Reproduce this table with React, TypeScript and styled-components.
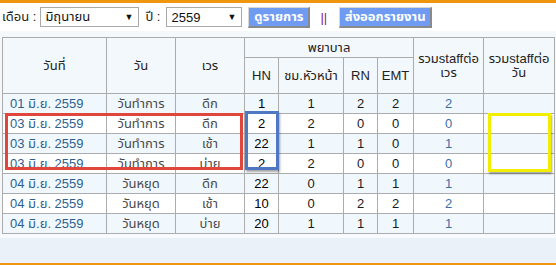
import React from "react";
import styled, { createGlobalStyle } from "styled-components";

const Global = createGlobalStyle`
  html, body { margin: 0; padding: 0; background: #ffffff; }
  body { font-family: Tahoma, "Liberation Sans", "Noto Sans Thai", "Noto Sans", sans-serif; font-size: 13px; color: #333; }
`;

const Page = styled.div`
  width: 556px;
  height: 265px;
  overflow: hidden;
  display: flex;
  flex-direction: column;
  background: #ffffff;
`;

const TopStrip = styled.div`
  height: 3px;
  background: #f0960e;
  flex: none;
`;

const Toolbar = styled.div`
  height: 28px;
  display: flex;
  align-items: center;
  padding-left: 2px;
  flex: none;
`;

const Label = styled.span<{ $ml?: number }>`
  margin-left: ${(p) => p.$ml ?? 0}px;
  color: #222;
  font-size: 13px;
  white-space: nowrap;
`;

const FakeSelect = styled.div<{ $w: number; $ml: number }>`
  box-sizing: border-box;
  width: ${(p) => p.$w}px;
  height: 20px;
  margin-left: ${(p) => p.$ml}px;
  border: 1px solid #a9a9a9;
  background: #fff;
  display: flex;
  align-items: center;
  justify-content: space-between;
  padding: 0 5px 0 4px;
  color: #111;
  font-size: 13px;
`;

const Arrow = styled.span`
  font-size: 9px;
  color: #111;
`;

const Button = styled.div<{ $w: number; $ml: number }>`
  box-sizing: border-box;
  width: ${(p) => p.$w}px;
  height: 21px;
  margin-left: ${(p) => p.$ml}px;
  background: #6f9cf2;
  color: #ffffff;
  font-weight: bold;
  font-size: 13px;
  display: flex;
  align-items: center;
  justify-content: center;
  border-top: 1px solid #d8d8d8;
  border-left: 1px solid #d8d8d8;
  border-right: 2px solid #8a8a8a;
  border-bottom: 2px solid #8a8a8a;
`;

const Sep = styled.span<{ $ml: number }>`
  margin-left: ${(p) => p.$ml}px;
  color: #8b1a8b;
  font-size: 13px;
`;

const Content = styled.div`
  background: #f5f8fb;
  padding: 6px 0 0 2px;
  flex: none;
`;

const TableWrap = styled.div`
  position: relative;
  width: 552px;
`;

const Table = styled.table`
  border-collapse: collapse;
  table-layout: fixed;
  width: 552px;
`;

const Th = styled.th`
  border: 1px solid #acacac;
  background: #f3f8fc;
  color: #222;
  font-weight: normal;
  font-size: 13px;
  text-align: center;
  padding: 0 2px;
  line-height: 14px;
`;

const Tr = styled.tr<{ $alt: boolean }>`
  height: 20px;
  background: ${(p) => (p.$alt ? "#f0f8fd" : "#ffffff")};
`;

const Td = styled.td<{ $color: string; $left?: boolean }>`
  border: 1px solid #acacac;
  padding: 0 ${(p) => (p.$left ? "0 0 7px" : "0")};
  text-align: ${(p) => (p.$left ? "left" : "center")};
  color: ${(p) => p.$color};
  font-size: 13px;
  line-height: 18px;
  white-space: nowrap;
`;

const Mark = styled.div<{ $c: string; $x: number; $y: number; $w: number; $h: number; $shadow?: boolean }>`
  position: absolute;
  box-sizing: border-box;
  left: ${(p) => p.$x}px;
  top: ${(p) => p.$y}px;
  width: ${(p) => p.$w}px;
  height: ${(p) => p.$h}px;
  border: 3px solid ${(p) => p.$c};
  box-shadow: ${(p) => (p.$shadow ? "1px 2px 2px rgba(0,0,0,0.35)" : "none")};
  pointer-events: none;
`;

const Bottom = styled.div`
  flex: 1;
  display: flex;
  flex-direction: column;
  background: #f8fbfd;
  padding-top: 4px;
`;

const BottomBand = styled.div`
  flex: 1;
  background: #eaf1f8;
`;

const BottomStrip = styled.div`
  height: 2px;
  background: #f0960e;
  flex: none;
`;

type Row = [string, string, string, number, number, number, number, number];

const rows: Row[] = [
  ["01 มิ.ย. 2559", "วันทำการ", "ดึก", 1, 1, 2, 2, 2],
  ["03 มิ.ย. 2559", "วันทำการ", "ดึก", 2, 2, 0, 0, 0],
  ["03 มิ.ย. 2559", "วันทำการ", "เช้า", 22, 1, 1, 0, 1],
  ["03 มิ.ย. 2559", "วันทำการ", "บ่าย", 2, 2, 0, 0, 0],
  ["04 มิ.ย. 2559", "วันหยุด", "ดึก", 22, 0, 1, 1, 1],
  ["04 มิ.ย. 2559", "วันหยุด", "เช้า", 10, 0, 2, 2, 2],
  ["04 มิ.ย. 2559", "วันหยุด", "บ่าย", 20, 1, 1, 1, 1],
];

const colWidths = [104, 69, 69, 34, 65, 34, 36, 70, 71];

export default function App() {
  return (
    <>
      <Global />
      <Page>
        <TopStrip />
        <Toolbar>
          <Label>เดือน :</Label>
          <FakeSelect $w={99} $ml={4}>
            <span>มิถุนายน</span>
            <Arrow>▼</Arrow>
          </FakeSelect>
          <Label $ml={6}>ปี :</Label>
          <FakeSelect $w={76} $ml={6}>
            <span>2559</span>
            <Arrow>▼</Arrow>
          </FakeSelect>
          <Button $w={62} $ml={6}>ดูรายการ</Button>
          <Sep $ml={10}>||</Sep>
          <Button $w={93} $ml={12}>ส่งออกรายงาน</Button>
        </Toolbar>
        <Content>
          <TableWrap>
            <Table>
              <colgroup>
                {colWidths.map((w, i) => (
                  <col key={i} style={{ width: w }} />
                ))}
              </colgroup>
              <thead>
                <tr style={{ height: 20 }}>
                  <Th rowSpan={2}>วันที่</Th>
                  <Th rowSpan={2}>วัน</Th>
                  <Th rowSpan={2}>เวร</Th>
                  <Th colSpan={4}>พยาบาล</Th>
                  <Th rowSpan={2}>รวมstaffต่อ<br />เวร</Th>
                  <Th rowSpan={2}>รวมstaffต่อ<br />วัน</Th>
                </tr>
                <tr style={{ height: 36 }}>
                  <Th>HN</Th>
                  <Th>ชม.หัวหน้า</Th>
                  <Th>RN</Th>
                  <Th>EMT</Th>
                </tr>
              </thead>
              <tbody>
                {rows.map((r, i) => (
                  <Tr key={i} $alt={i % 2 === 0}>
                    <Td $left $color="#2f5f8f">{r[0]}</Td>
                    <Td $color="#4a4a4a">{r[1]}</Td>
                    <Td $color="#4a4a4a">{r[2]}</Td>
                    <Td $color="#000">{r[3]}</Td>
                    <Td $color="#1a1a1a">{r[4]}</Td>
                    <Td $color="#1a1a1a">{r[5]}</Td>
                    <Td $color="#1a1a1a">{r[6]}</Td>
                    <Td $color="#3a6ea8">{r[7]}</Td>
                    <Td $color="#1a1a1a"></Td>
                  </Tr>
                ))}
              </tbody>
            </Table>
            <Mark $c="#e0463c" $x={3} $y={76} $w={238} $h={57} />
            <Mark $c="#4f77c2" $x={243} $y={74} $w={34} $h={59} $shadow />
            <Mark $c="#f2ee00" $x={486} $y={76} $w={63} $h={59} $shadow />
          </TableWrap>
        </Content>
        <Bottom>
          <BottomBand />
          <BottomStrip />
        </Bottom>
      </Page>
    </>
  );
}
